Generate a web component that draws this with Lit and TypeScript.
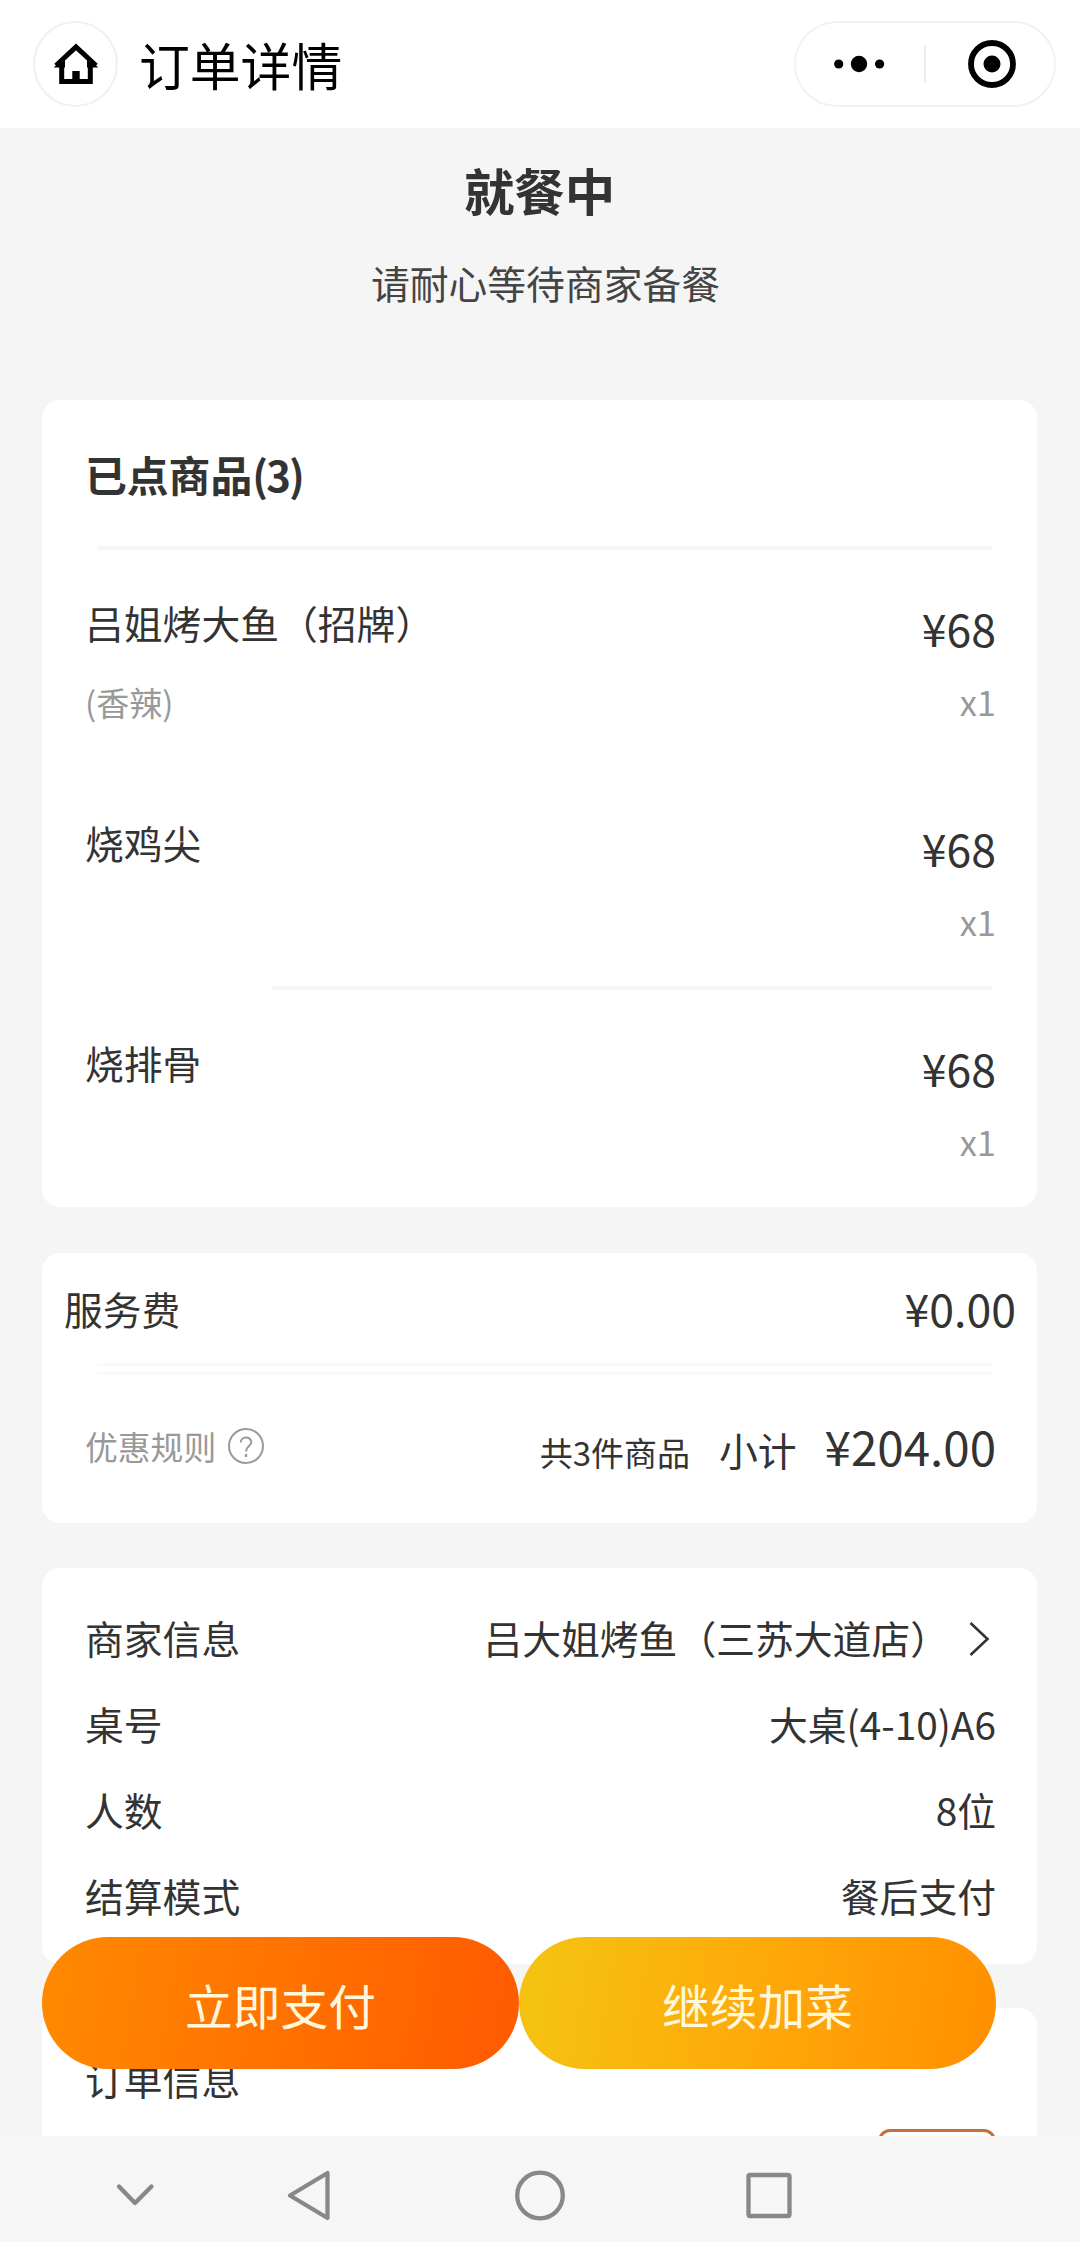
import { LitElement, html, css, nothing } from "lit";
import { customElement } from "lit/decorators.js";

interface Dish {
  name: string;
  spec?: string;
  price: string;
  count: string;
  ruled?: boolean;
}

const dishes: Dish[] = [
  { name: "吕姐烤大鱼（招牌）", spec: "(香辣)", price: "¥68", count: "x1" },
  { name: "烧鸡尖", price: "¥68", count: "x1", ruled: true },
  { name: "烧排骨", price: "¥68", count: "x1" },
];

const facts = [
  { label: "商家信息", value: "吕大姐烤鱼（三苏大道店）", link: true },
  { label: "桌号", value: "大桌(4-10)A6", link: false },
  { label: "人数", value: "8位", link: false },
  { label: "结算模式", value: "餐后支付", link: false },
];

@customElement("app-root")
export class AppRoot extends LitElement {
  static styles = css`
    :host {
      display: block;
      width: 1080px;
      height: 2242px;
      overflow: hidden;
      font-family: "Noto Sans CJK SC", "Noto Sans", sans-serif;
      font-size: 38.8px;
      line-height: 56px;
      color: #333;
      background: #f5f5f5;
    }
    * {
      box-sizing: border-box;
    }
    svg {
      display: block;
      flex: none;
    }
    .screen {
      display: flex;
      flex-direction: column;
      height: 2242px;
    }

    /* top bar */
    .bar {
      display: flex;
      align-items: center;
      flex: none;
      height: 128px;
      padding: 0 24px 0 33px;
      background: #fff;
    }
    .home {
      display: flex;
      align-items: center;
      justify-content: center;
      width: 85px;
      height: 86px;
      border: 2px solid #f0f0f0;
      border-radius: 50%;
    }
    .title {
      flex: 1;
      padding-left: 21px;
      font-size: 50.8px;
      line-height: 74px;
      color: #000;
    }
    .capsule {
      display: flex;
      align-items: center;
      width: 262px;
      height: 86px;
      border: 2px solid #f2f2f2;
      border-radius: 43px;
    }
    .capsule .half {
      display: flex;
      flex: none;
      justify-content: center;
      width: 128px;
      padding-right: 2px;
    }
    .capsule .half.end {
      padding-left: 6px;
    }
    .capsule .split {
      width: 2px;
      height: 38px;
      background: #ececec;
    }

    /* scrolling body */
    .body {
      position: relative;
      flex: none;
      height: 2008px;
      overflow: hidden;
      padding: 0 43px 0 42px;
    }
    .status {
      height: 272px;
      padding-top: 25px;
      text-align: center;
    }
    .status .state {
      font-size: 50.4px;
      line-height: 74px;
      font-weight: 700;
    }
    .status .hint {
      padding: 27px 0 0 12px;
      color: #444;
    }
    .card {
      background: #fff;
      border-radius: 18px;
    }
    .rule {
      height: 4px;
      margin: 0 45px 0 55px;
      background: #f6f6f6;
    }

    .dishes {
      height: 807px;
    }
    .dishes .head {
      height: 146px;
      padding: 44px 0 0 43px;
      font-size: 41.8px;
      line-height: 60px;
      font-weight: 700;
    }
    .dishes .tally {
      letter-spacing: -1.8px;
    }
    .dish {
      display: flex;
      flex-direction: column;
      height: 220px;
    }
    .dish .cols {
      display: flex;
      flex: 1;
      justify-content: space-between;
      padding: 44px 41px 0 43px;
    }
    .dish .spec {
      padding-top: 28px;
      font-size: 33px;
      line-height: 48px;
      color: #999;
    }
    .dish .right {
      text-align: right;
    }
    .dish .price {
      padding-top: 2px;
      font-size: 44.6px;
      line-height: 64px;
    }
    .dish .count {
      padding-top: 16px;
      font-size: 34.5px;
      line-height: 50px;
      color: #999;
    }
    .dish .rule {
      margin-left: 230px;
    }

    .totals {
      height: 270px;
      margin-top: 46px;
    }
    .fee {
      display: flex;
      align-items: center;
      justify-content: space-between;
      height: 110px;
      padding: 0 21px 0 22px;
    }
    .fee .amount {
      font-size: 44.6px;
    }
    .rules {
      height: 12px;
      margin: 0 45px 0 55px;
      border-top: 3px solid #f9f9f9;
      border-bottom: 3px solid #f9f9f9;
    }
    .sum {
      display: flex;
      align-items: flex-start;
      justify-content: space-between;
      padding: 43px 41px 0 43px;
    }
    .sum .promo {
      display: flex;
      align-items: center;
      gap: 11px;
      font-size: 32.8px;
      color: #999;
    }
    .sum .calc {
      display: flex;
      align-items: baseline;
    }
    .sum .pieces {
      font-size: 33px;
    }
    .sum .label {
      padding: 0 28px 0 29px;
    }
    .sum .total {
      font-size: 47.5px;
    }

    .facts {
      height: 396px;
      margin-top: 45px;
      padding: 26px 41px 0 43px;
    }
    .fact {
      display: flex;
      align-items: center;
      justify-content: space-between;
      height: 86px;
    }
    .fact .value {
      display: flex;
      align-items: center;
    }
    .fact .go {
      margin: 3px 6px 0 20px;
    }

    .order {
      height: 260px;
      margin-top: 44px;
      padding: 42px 41px 0 43px;
    }
    .order .copy {
      width: 118px;
      height: 56px;
      margin: 23px 0 0 auto;
      border: 3px solid #c4703a;
      border-radius: 12px;
    }

    /* floating actions over the scrolled cards */
    .actions {
      position: absolute;
      left: 42px;
      top: 1809px;
      display: flex;
    }
    .action {
      width: 477px;
      height: 132px;
      border-radius: 66px;
      font-size: 47.7px;
      line-height: 136px;
      text-align: center;
      color: #fff8dc;
    }
    .pay {
      background: linear-gradient(100deg, #ff8800 5%, #ff7200 50%, #ff5c00 95%);
    }
    .more {
      background: linear-gradient(100deg, #f5c211 5%, #ffa60a 55%, #ff9000 97%);
    }

    /* system navigation */
    .nav {
      flex: 1;
      background: #f7f6f7;
    }
  `;

  private home() {
    return html`<svg width="46" height="42" viewBox="0 0 46 42" fill="none">
      <path d="M3 22.500 L23 3.800 L43 22.500 M8.700 20 V38.500 H37.300 V20" stroke="#000" stroke-width="5" />
      <path d="M0.800 24.500 L8 17 L12 17 V24.500 Z M45.200 24.500 L38 17 L34 17 V24.500 Z" fill="#000" />
      <rect x="19.300" y="28" width="7.400" height="11" fill="#000" />
    </svg>`;
  }

  private bar() {
    return html`<header class="bar">
      <div class="home">${this.home()}</div>
      <div class="title">订单详情</div>
      <div class="capsule">
        <div class="half">
          <svg width="52" height="18" viewBox="0 0 52 18">
            <circle cx="5.700" cy="9" r="4.600" />
            <circle cx="26" cy="9" r="8.200" />
            <circle cx="46.600" cy="9" r="4.600" />
          </svg>
        </div>
        <div class="split"></div>
        <div class="half end">
          <svg width="50" height="50" viewBox="0 0 50 50">
            <circle cx="25" cy="25" r="21" fill="none" stroke="#000" stroke-width="5.800" />
            <circle cx="25" cy="25" r="8.500" />
          </svg>
        </div>
      </div>
    </header>`;
  }

  private dish(d: Dish) {
    return html`<div class="dish">
      <div class="cols">
        <div>
          <div>${d.name}</div>
          ${d.spec ? html`<div class="spec">${d.spec}</div>` : nothing}
        </div>
        <div class="right">
          <div class="price">${d.price}</div>
          <div class="count">${d.count}</div>
        </div>
      </div>
      ${d.ruled ? html`<div class="rule"></div>` : nothing}
    </div>`;
  }

  private totals() {
    return html`<section class="card totals">
      <div class="fee"><span>服务费</span><span class="amount">¥0.00</span></div>
      <div class="rules"></div>
      <div class="sum">
        <div class="promo">
          优惠规则
          <svg width="38" height="38" viewBox="0 0 38 38" fill="none" stroke="#999" stroke-width="2">
            <circle cx="19" cy="19" r="17" />
            <path d="M13.700 15.500 C13.700 8.800 24.300 8.800 24.300 15.300 C24.300 19 19 19.300 19 24.500" />
            <path d="M19 27 V30" stroke-width="2.400" />
          </svg>
        </div>
        <div class="calc">
          <span class="pieces">共3件商品</span>
          <span class="label">小计</span>
          <span class="total">¥204.00</span>
        </div>
      </div>
    </section>`;
  }

  private facts() {
    return html`<section class="card facts">
      ${facts.map(
        (f) => html`<div class="fact">
          <span>${f.label}</span>
          <span class="value">
            ${f.value}
            ${f.link
              ? html`<svg class="go" width="21" height="36" viewBox="0 0 21 36" fill="none">
                  <path d="M1.500 2 L18.500 18 L1.500 34" stroke="#333" stroke-width="2.600" />
                </svg>`
              : nothing}
          </span>
        </div>`
      )}
    </section>`;
  }

  render() {
    return html`<div class="screen">
      ${this.bar()}
      <main class="body">
        <div class="status">
          <div class="state">就餐中</div>
          <div class="hint">请耐心等待商家备餐</div>
        </div>
        <section class="card dishes">
          <div class="head">已点商品<span class="tally">(3)</span></div>
          <div class="rule"></div>
          ${dishes.map((d) => this.dish(d))}
        </section>
        ${this.totals()} ${this.facts()}
        <section class="card order">
          <div>订单信息</div>
          <div class="copy"></div>
        </section>
        <div class="actions">
          <div class="action pay">立即支付</div>
          <div class="action more">继续加菜</div>
        </div>
      </main>
      <nav class="nav">
        <svg width="1080" height="106" viewBox="0 0 1080 106" fill="none" stroke="#888" stroke-width="4.300" stroke-linejoin="round" stroke-linecap="round">
          <path d="M119 50.500 L135 67 L151.500 50.500" />
          <path d="M327.500 37 V82 L290 59.500 Z" />
          <circle cx="540" cy="59.500" r="22.800" />
          <rect x="748.500" y="39" width="41" height="41" rx="1.500" />
        </svg>
      </nav>
    </div>`;
  }
}
